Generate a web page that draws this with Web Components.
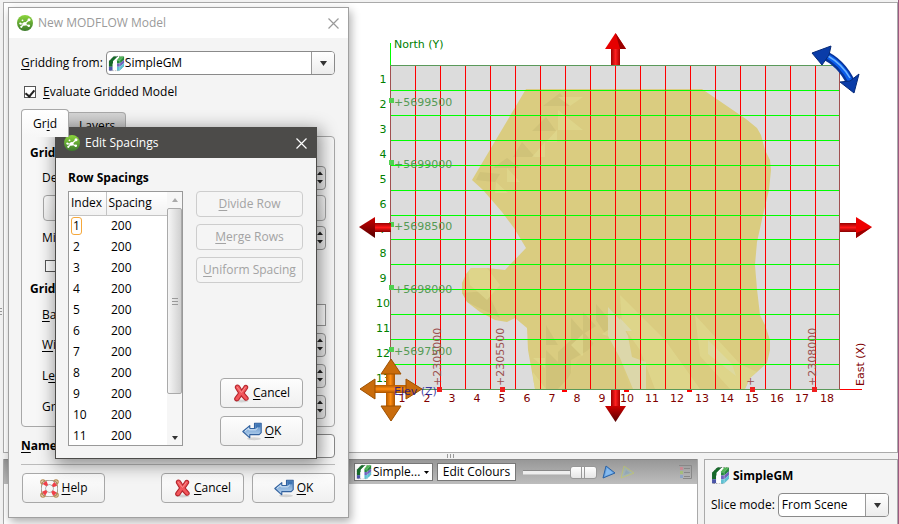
<!DOCTYPE html>
<html lang="en">
<head>
<meta charset="utf-8">
<title>New MODFLOW Model</title>
<style>
html,body{margin:0;height:100%;overflow:hidden}
body{font:12px/16px "Open Sans","Noto Sans",sans-serif;color:#000;background:#f2f2f2}
</style>
</head>
<body>
<app-shell></app-shell>
<script>
const ICONS = {
  frog: `<svg width="16" height="16" viewBox="0 0 16 16"><defs><linearGradient id="fg" x2="0" y2="1"><stop stop-color="#8cd63c"/><stop offset="1" stop-color="#3c7a2c"/></linearGradient></defs><circle cx="8" cy="8" r="8" fill="url(#fg)"/><g fill="none" stroke="#fff" stroke-width="1.200" stroke-linecap="round"><path d="M3.500 8.800l4 .2 4.500-4M7.500 9L4.500 11.500M7.500 9l4 1.800"/></g><g fill="#fff"><circle cx="12" cy="4.800" r="1.500"/><circle cx="7.700" cy="8.800" r="1.900"/><circle cx="3.300" cy="8.500" r="1.100"/><circle cx="4.300" cy="11.800" r="1.100"/><circle cx="11.800" cy="10.800" r="1.300"/><circle cx="5.500" cy="5.300" r=".9"/></g></svg>`,
  model: `<svg width="18" height="18" viewBox="0 0 18 18"><path d="M1.500 16.500V6L6 1.500h10.500V12L12 16.500z" fill="#fff" stroke="#777" stroke-width=".8" stroke-dasharray="1.500 1"/><path d="M1 6.500L6 1.500h4.500L5.500 6.500V9H4.800v3.500H1z" fill="#176a2b"/><path d="M1 12.500h3.800v3.800H1z" fill="#4b55a8"/><path d="M9 5.500L12.500 1.500H17L12.500 6H9z" fill="#52b457"/><path d="M9.500 6h3L17 1.500V5l-4.500 4h-3z" fill="#238a3b"/><path d="M9.500 9h3L17 5v3.500l-4.500 4h-3z" fill="#6f62bd"/><path d="M9.500 12.500h3l4.500-4V12l-4.500 4.500h-3z" fill="#5fc0d2"/><path d="M12.500 6v10.500" stroke="#fff" stroke-opacity=".5" stroke-width=".6"/><path d="M5.300 6.500L9.800 2h2L8.800 6v10.500H5.300z" fill="#fff"/></svg>`,
  cancel: `<svg width="17" height="19" viewBox="0 0 17 19"><ellipse cx="8.500" cy="17" rx="7" ry="1.500" fill="#000" opacity=".13"/><path d="M3.500 1.200Q5.500.3 6.700 2.600L8.700 6 11.300 2Q13 .5 14.300 2.200q1 1.300-.3 2.800L11.200 9l3.600 4.300q1 1.700-.4 2.600-1.700 1-3-.6L8.300 12l-2.800 4.200q-1.500 1.300-3.200.1-1.300-1.300 0-3L5.500 9 2.600 4.300Q1.700 2.200 3.500 1.200z" fill="#f2565b" stroke="#b4242b" stroke-width="1.100"/><path d="M4 3l4.500 5.500 4-5.300" fill="none" stroke="#fb8f8e" stroke-width="1"/></svg>`,
  ok: `<svg width="20" height="19" viewBox="0 0 20 19"><defs><linearGradient id="ob" x2="0" y2="1"><stop stop-color="#5689c5"/><stop offset="1" stop-color="#c2dcf3"/></linearGradient></defs><ellipse cx="12" cy="16.800" rx="7" ry="1.500" fill="#000" opacity=".13"/><path d="M.8 9.500L7.800 3.600v3h4.700V1.300h6.700v9.300l-2 2H7.800v3.200z" fill="url(#ob)" stroke="#33629f" stroke-width="1.100" stroke-linejoin="round"/><path d="M13.500 2.300v4.800l1.800-1.800h3V2.300z" fill="#3f75b4"/><path d="M2.800 9.300l4-3.300v1.800h6.900l2-1.800" fill="none" stroke="#dcecfa"/></svg>`,
  help: `<svg width="19" height="19" viewBox="0 0 19 19"><g fill="none" stroke="#b58b50" stroke-width="1.200"><circle cx="3" cy="3" r="2.200"/><circle cx="16" cy="3" r="2.200"/><circle cx="3" cy="16" r="2.200"/><circle cx="16" cy="16" r="2.200"/><rect x="2" y="2" width="15" height="15" rx="3"/></g><circle cx="9.500" cy="9.500" r="6" fill="none" stroke="#777" stroke-width="5"/><circle cx="9.500" cy="9.500" r="6" fill="none" stroke="#f8f8f8" stroke-width="4"/><circle cx="9.500" cy="9.500" r="6" fill="none" stroke="#f04048" stroke-width="4.200" stroke-dasharray="3.400 6.025" stroke-dashoffset="-3"/></svg>`,
  close: `<svg width="11" height="11" viewBox="0 0 11 11"><path d="M.5.5l10 10M10.500.5l-10 10" stroke="currentColor" stroke-width="1.200"/></svg>`
};
const BASE = `*,:host{box-sizing:border-box}button,input,select{font:inherit;color:inherit;margin:0}svg{display:block;flex:none}u{text-underline-offset:2px}`;

function define(name, html, setup) {
  customElements.define(name, class extends HTMLElement {
    constructor() {
      super();
      const t = document.createElement('template');
      t.innerHTML = html;
      this.attachShadow({mode: 'open'}).append(t.content.cloneNode(true));
    }
    connectedCallback() {
      if (this.ready) return;
      this.ready = true;
      if (setup) setup.call(this, this.shadowRoot);
    }
  });
}

define('ui-icon', `<style>:host{display:inline-block;flex:none}svg{display:block}</style>`, function (r) {
  r.innerHTML += ICONS[this.getAttribute('name')];
  const size = this.getAttribute('size');
  if (size) { const s = r.querySelector('svg'); s.setAttribute('width', size); s.setAttribute('height', size); }
});

define('push-button', `<style>${BASE}
:host{display:block}
button{width:100%;height:var(--button-height,30px);display:flex;align-items:center;justify-content:center;gap:3px;padding:0;border:1px solid #a8a8a8;border-radius:4px;background:linear-gradient(#fdfdfd,#f0f0f0)}
button:disabled{color:#a3a3a3;border-color:#cdcdcd;background:#f5f5f5}
</style><button type="button"><slot name="icon"></slot><span><slot></slot></span></button>`, function (r) {
  r.querySelector('button').disabled = this.hasAttribute('disabled');
});

define('combo-box', `<style>${BASE}
:host{display:grid;grid-template-columns:1fr 23px;height:24px;border:1px solid #8a8a8a;border-radius:4px;background:#fff;overflow:hidden}
select{grid-area:1/1/2/3;appearance:none;border:0;background:none;padding:0 0 0 var(--inset,3px);width:100%;outline:0;z-index:1}
.arrow{grid-area:1/2;border-left:1px solid #999;background:linear-gradient(#fff,#ececec);display:grid;place-items:center;pointer-events:none}
.icon{grid-area:1/1;display:flex;align-items:center;padding-left:1px;pointer-events:none}
</style><span class="icon"><slot name="icon"></slot></span><span class="arrow"><svg width="7" height="5"><path d="M0 0h7L3.500 5z" fill="#333"/></svg></span><select><option></option></select>`, function (r) {
  const s = r.querySelector('select');
  s.options[0].textContent = this.getAttribute('value');
  s.setAttribute('aria-label', this.getAttribute('label'));
});

define('app-window', `<style>${BASE}
:host{display:flex;flex-direction:column;border:1px solid #a0a0a0;background:#f4f4f4;box-shadow:2px 4px 9px rgba(0,0,0,.32)}
header{display:flex;align-items:center;gap:5px;height:30px;padding:0 9px 0 8px;background:#fff;color:#9a9a9a}
h1{flex:1;margin:0;font:inherit}
header button{border:0;background:none;padding:0;width:11px;height:11px}
:host([active]){border-color:#4c4b49;box-shadow:2px 4px 16px 2px rgba(0,0,0,.42)}
:host([active]) header{background:#4c4b49;color:#fff}
</style><header><ui-icon name="frog"></ui-icon><h1></h1><button type="button" aria-label="Close">${ICONS.close}</button></header><slot></slot>`, function (r) {
  r.querySelector('h1').textContent = this.getAttribute('heading');
});

const spin = (id, label) => `<div class="row"><label for="${id}">${label}</label><span class="spin"><input id="${id}" type="text"><svg width="10" height="22"><path d="M2 8h6L5 4.500zM2 13h6l-3 3.500z" fill="#222"/></svg></span></div>`;

define('model-form', `<style>${BASE}
:host{display:flex;flex-direction:column;gap:9px;padding:13px 13px 14px 12px}
.line{display:flex;align-items:center;gap:7px}
.source{gap:3px}
.line combo-box{flex:1}
.check{height:16px;padding-left:3px}
input[type=checkbox]{appearance:none;width:12px;height:12px;border:1px solid #555;background:#fff;display:grid;place-items:center}
input[type=checkbox]:checked::before{content:"";width:4px;height:7px;border:solid #222;border-width:0 2px 2px 0;transform:rotate(40deg)}
.tabs{display:flex;align-items:flex-end;height:27px}
.tabs button{height:24px;padding:3px 10px 0;border:1px solid #a8a8a8;border-left:0;border-radius:0 4px 0 0;background:linear-gradient(#d4d4d4,#bcbcbc)}
.tabs .on{height:28px;margin-bottom:-1px;padding:1px 11px 0;border:1px solid #a8a8a8;border-bottom:0;border-radius:4px 4px 0 0;background:linear-gradient(#fff,#f7f7f7);z-index:1}
.pane{border:1px solid #a8a8a8;border-radius:0 4px 4px 4px;background:#f7f7f7;display:grid;gap:5px;padding:8px 8px 7px;margin-top:-9px}
section{display:grid;gap:5px}
section+section{gap:7px}
h2{margin:0;font:bold 12px/16px "Open Sans","Noto Sans",sans-serif}
.row{display:grid;grid-template-columns:140px 1fr;align-items:center;padding-left:12px}
.plain{border:1px solid #999;background:#fff;height:22px;width:100%}
.spin{display:flex;height:24px;border:1px solid #999;border-radius:4px;background:#eee;overflow:hidden}
.spin input{flex:1;min-width:0;border:0;border-right:1px solid #999;background:#fff}
.pane push-button{--button-height:26px;margin-left:13px}
.pane .check{height:21px;padding-left:15px}
.name{margin-top:-2px;font-weight:bold}
.name input{flex:1;min-width:0;height:24px;border:1px solid #888;border-radius:4px;background:#fff}
footer{display:flex;gap:8px;border-top:1px solid #bbb;padding:8px 0 0 1px;margin-top:-3px}
footer push-button{width:83px}
.push{margin-right:auto}
</style>
<div class="line source"><label><u>G</u>ridding from:</label><combo-box value="SimpleGM" label="Gridding from" style="--inset:18px"><ui-icon slot="icon" name="model" size="17"></ui-icon></combo-box></div>
<div class="line check"><input type="checkbox" id="ev" checked><label for="ev"><u>E</u>valuate Gridded Model</label></div>
<div class="tabs" role="tablist"><button class="on" role="tab" type="button">Gr<u>i</u>d</button><button role="tab" type="button">Layers</button></div>
<div class="pane">
<section><h2>Grid</h2>${spin('de', 'De')}<push-button></push-button>${spin('mi', 'Mi')}<div class="line check"><input type="checkbox" aria-label="Option"></div></section>
<section><h2>Grid</h2><div class="row"><label for="ba"><u>B</u>a</label><input class="plain" id="ba"></div>${spin('wi', '<u>W</u>i')}${spin('le', 'L<u>e</u>')}${spin('gr', 'Gr')}</section>
</div>
<div class="line name"><label for="nm"><u>N</u>ame:</label><input id="nm"></div>
<footer><push-button class="push"><ui-icon slot="icon" name="help"></ui-icon><u>H</u>elp</push-button><push-button><ui-icon slot="icon" name="cancel"></ui-icon><u>C</u>ancel</push-button><push-button><ui-icon slot="icon" name="ok"></ui-icon><u>O</u>K</push-button></footer>`);

define('spacing-table', `<style>${BASE}
:host{display:grid;grid-template-columns:1fr 15px;border:1px solid #999;background:#fff;overflow:hidden;height:255px;align-items:start}
table{border-collapse:collapse;width:100%;table-layout:fixed}
th{height:23px;padding:0 0 0 2px;font-weight:normal;text-align:left;background:linear-gradient(#fff,#f2f2f2);border-bottom:1px solid #c4c4c4}
th+th{border-left:1px solid #c4c4c4}
th:first-child{width:37px}
td{height:21px;padding:0 0 0 2px}
td+td{padding-left:5px}
td span{display:inline-block;padding:0 1px;border:1px solid transparent;border-radius:3px}
tr.sel td:first-child span{border-color:#f5a83c}
.bar{display:flex;flex-direction:column;align-self:stretch;background:#f6f6f6}
.bar button{border:0;padding:0;background:none;height:16px;display:grid;place-items:center}
.thumb{height:186px;border:1px solid #aaa;border-radius:2px;background:linear-gradient(90deg,#f6f6f6,#d0d0d0);display:grid;place-items:center}
.bar button:last-child{margin-top:auto}
</style><table><thead><tr><th>Index</th><th>Spacing</th></tr></thead><tbody></tbody></table>
<div class="bar"><button type="button" aria-label="Scroll up"><svg width="6" height="4"><path d="M0 4h6L3 0z" fill="#aaa"/></svg></button><div class="thumb"><svg width="6" height="7"><path d="M0 .5h6M0 3.500h6M0 6.500h6" stroke="#999"/></svg></div><button type="button" aria-label="Scroll down"><svg width="6" height="4"><path d="M0 0h6L3 4z" fill="#333"/></svg></button></div>`, function (r) {
  const body = r.querySelector('tbody');
  for (let i = 1; i <= 11; i++)
    body.insertAdjacentHTML('beforeend', `<tr${i === 1 ? ' class="sel"' : ''}><td><span>${i}</span></td><td>200</td></tr>`);
});

define('spacing-form', `<style>${BASE}
:host{display:grid;grid-template-columns:115px 107px;gap:5px 13px;padding:12px 13px 12px 12px}
h2{margin:0;grid-column:1/3;font:bold 12px/16px "Open Sans","Noto Sans",sans-serif}
.side{display:flex;flex-direction:column;gap:7px;--button-height:26px}
.bottom{margin-top:auto;padding-left:24px;display:grid;gap:8px;--button-height:30px}
</style><h2>Row Spacings</h2><spacing-table></spacing-table>
<div class="side"><push-button disabled><u>D</u>ivide Row</push-button><push-button disabled><u>M</u>erge Rows</push-button><push-button disabled><u>U</u>niform Spacing</push-button>
<div class="bottom"><push-button><ui-icon slot="icon" name="cancel"></ui-icon><u>C</u>ancel</push-button><push-button><ui-icon slot="icon" name="ok"></ui-icon><u>O</u>K</push-button></div></div>`);

define('scene-view', `<style>
:host{display:block;border:1px solid #aaa;background:#fff;overflow:hidden;min-height:0}
svg{display:block;width:100%;height:100%}
text{font:11px "DejaVu Sans",sans-serif}
.n{fill:#008000}.e{fill:#800000}.ns{fill:#559a55}.es{fill:#9c5050}.m{text-anchor:middle}
</style><svg><defs>
<linearGradient id="rv"><stop stop-color="#900"/><stop offset=".5" stop-color="#ff2020"/><stop offset="1" stop-color="#a00"/></linearGradient>
<linearGradient id="rh" x2="0" y2="1"><stop stop-color="#900"/><stop offset=".5" stop-color="#ff1818"/><stop offset="1" stop-color="#800"/></linearGradient>
<linearGradient id="ov"><stop stop-color="#b35a00"/><stop offset=".5" stop-color="#ff8c10"/><stop offset="1" stop-color="#a85200"/></linearGradient>
<linearGradient id="oh" x2="0" y2="1"><stop stop-color="#b35a00"/><stop offset=".5" stop-color="#ff8c10"/><stop offset="1" stop-color="#a85200"/></linearGradient>
<linearGradient id="dk" x2="0" y2="1"><stop stop-color="#c00"/><stop offset="1" stop-color="#500"/></linearGradient>
<clipPath id="body"><path d="M526 89H702L746 119 757 128 761 135 765 150 770 160 771 170 769 190 763 215 757 242 755 265 757 289 760 315 765 325 770 340 770 350 767 363 757 372 750 378 745 389H535L528 350 527 328 515 318 507 322 495 320 480 312 467 302 462 293 462 283 466 274 471 268 487 268 505 270 526 248 514 228 502 212 483 190 472 180z"/></clipPath></defs>
<g transform="translate(-4 -3)">
<rect x="390" y="65" width="450" height="325" fill="#dcdcdc"/>
<g clip-path="url(#body)"><path fill="#dacc80" d="M455 85H775V390H455z"/>
<path fill="#c9bc74" opacity=".6" d="M543 106L560 93 570 106zM532 131L546 117 556 131zM513 157L522 142 535 157zM493 168L507 158 520 168zM476 180L480 172 500 174 495 182zM546 345V325L558 345zM558 389V352L571 340 571 375zM571 360V318L596 346zM583 334L583 312 596 326zM596 320V304L608 318 608 338zM546 389V350L558 362V389zM462 293L487 291 500 318 467 302z"/>
<path fill="#e0d98e" opacity=".7" d="M558 97H583L570 106zM558 110L583 130H558zM546 142L557 130V142zM532 157L545 142V157zM507 182V168L520 182zM495 193L496 182 508 193zM533 372L546 389H533zM533 358L545 368V358zM571 345L583 334V357zM596 338L608 352V330zM468 268L487 268 500 285 487 300 470 285zM620 295L665 340 700 389H655L640 350 622 325zM695 315L740 364 757 372 745 389H730L700 356z"/>
<path fill="#d8ca80" d="M562 389L578 360 592 346 598 333 608 336 620 358 630 389z"/>
<path fill="#dcd8b2" opacity=".85" d="M608 307L620 320 628 336 632 357 646 362V389H633L620 358 608 336zM620 318L632 331H620z"/>
<path fill="#dcd9a6" opacity=".75" d="M708 340L732 364 736 376 708 354z"/>
</g>
<g id="lines" shape-rendering="crispEdges"></g><g id="labels"></g>
<text class="n" x="394" y="48">North (Y)</text><text class="e" transform="translate(864 386) rotate(-90)">East (X)</text>
<g>
<path fill="url(#rv)" d="M611 48h9v17h-9z"/><path fill="#e60000" d="M605 49h21L615.500 33z"/><path fill="#9a0000" d="M620 49h6L615.500 33z"/>
<path fill="url(#rv)" d="M611 390h9v17h-9z"/><path fill="url(#dk)" d="M605 406h21L615.500 422z"/>
<path fill="url(#rh)" d="M840 223h17v9h-17zM374 223h17v9h-17z"/><path fill="#ee0000" d="M856 217v21l16-11z"/><path fill="#990000" d="M856 238v-5l16-6z"/><path fill="url(#dk)" d="M375 217v21l-16-11z"/>
<path fill="url(#ov)" d="M386 374h9v32h-9z"/><path fill="url(#oh)" d="M375 385h32v8h-32z"/>
<g fill="#c96c0c" stroke="#9c5000" stroke-width="1"><path d="M381 374h20L391 359zM381 406h20L391 421zM375 379v20L360 389zM406 379v20L422 389z"/></g>
<path d="M822 54Q841 62 851 83" fill="none" stroke="#07349a" stroke-width="9"/><path d="M824 54Q842 63 851 82" fill="none" stroke="#0a5bea" stroke-width="5"/><path d="M828 56Q842 64 850 78" fill="none" stroke="#6eb4ff" stroke-width="1.500"/>
<path fill="#0a3ca8" stroke="#062a78" d="M812 53l19-7-2 9-7 10z"/><path fill="#0a3ca8" stroke="#062a78" d="M840 82l10-1 9-7-5 19z"/>
</g>
<text x="394" y="395" fill="#101090" opacity=".8">Elev (Z)</text>
</g></svg>`, function (r) {
  const xs = Array.from({length: 18}, (_, i) => 390 + 25 * i), ys = [65, 90, 115, 140, 165, 190, 215, 239, 264, 289, 314, 339, 364];
  let l = '', t = '';
  for (const x of xs.slice(1)) l += `<path fill="#f00" d="M${x} 66h1v323h-1z"/>`;
  for (const y of ys.slice(1)) l += `<path fill="#0f0" d="M391 ${y}h448v1h-448z"/>`;
  l += '<path fill="#5a9a5a" d="M390 65h450v1H390zM390 389h450v1H390z"/><path fill="#a05050" d="M390 66h1v323h-1zM839 66h1v323h-1z"/><path fill="#0f0" d="M390 43h1v22h-1z"/><path fill="#f00" d="M840 389h22v1h-22z"/>';
  ys.forEach((y, i) => t += `<text class="n m" x="383" y="${y + 18}">${i + 1}</text>`);
  xs.forEach((x, i) => t += `<text class="e m" x="${x + 12}" y="402">${i + 1}</text>`);
  [[5699500, 106], [5699000, 168], [5698500, 230], [5698000, 293], [5697500, 355]].forEach(([n, y]) => {
    t += `<text class="ns" x="394" y="${y}">+${n}</text>`;
    l += `<path fill="#50d050" d="M389 ${y - 8}h5v5h-5z"/>`;
  });
  [['+2305000', 441], ['+2305500', 504], ['+', 754], ['+2308000', 816]].forEach(([n, x]) => {
    t += `<text class="es" transform="translate(${x} 386) rotate(-90)">${n}</text>`;
    l += `<path fill="#ee2020" d="M${x - 4} 387h5v5h-5z"/>`;
  });
  [562, 624, 687].forEach(x => l += `<path fill="#f00" d="M${x} 390h5v2h-5z"/>`);
  r.getElementById('lines').innerHTML = l;
  r.getElementById('labels').innerHTML = t;
});

define('shape-toolbar', `<style>${BASE}
:host{display:flex;align-items:center;justify-content:flex-end;gap:4px;height:25px;padding:0 3px 0 350px;background:linear-gradient(#989898,#bdbdbd);border-top:1px solid #888}
button{display:flex;align-items:center;gap:1px;height:18px;padding:0 5px;border:1px solid #777;background:#fff;white-space:nowrap}
.pick{padding:0 3px 0 1px;width:79px}
.edit{width:79px;justify-content:center;padding:0}
.arrow{margin-left:auto}
input{appearance:none;width:74px;height:14px;margin:0 3px 0 3px;background:linear-gradient(#888,#888) 0 5px/100% 1px no-repeat,linear-gradient(#eee,#eee) 0 6px/100% 3px no-repeat,linear-gradient(#ccc,#ccc) 0 9px/100% 1px no-repeat}
input::-webkit-slider-thumb{appearance:none;width:27px;height:13px;border:1px solid #999;border-radius:3px;background:linear-gradient(90deg,transparent 10px,#999 10px,#999 11px,transparent 11px,transparent 13px,#999 13px,#999 14px,transparent 14px),linear-gradient(#fff,#e6e6e6)}
.play{margin-left:-2px}
.faint{opacity:.45}
.list{margin-left:auto}
</style><button class="pick" type="button"><ui-icon name="model" size="16"></ui-icon>Simple...<svg class="arrow" width="5" height="3"><path d="M0 0h5L2.500 3z"/></svg></button><button class="edit" type="button">Edit Colours</button><input type="range" aria-label="Opacity" value="100">
<svg class="play" width="14" height="14"><path d="M4 1l9 7-12 5z" fill="#65a3e2" stroke="#2b62a5"/><path d="M5 3l6 5-8 3z" fill="#9cc9f5" opacity=".6"/></svg>
<svg class="faint" width="15" height="14"><path d="M4 1l10 7L1 13z" fill="#9bb" stroke="#cdd840"/><path d="M6 5l4 3-6 2z" fill="#77a4c4"/></svg>
<svg class="list" width="15" height="16"><path d="M0 1.500h12.500v13H4" fill="none" stroke="#888"/><path d="M5 4.500h6M5 8.500h6M5 12.500h6" stroke="#888"/><path fill="#c98a94" d="M1 3h3v3H1z"/><path fill="#a5bd7c" d="M1 7h3v3H1z"/><path fill="#90a5c4" d="M1 11h3v3H1z"/></svg>`);

define('shape-properties', `<style>${BASE}
:host{display:grid;align-content:start;gap:8px;padding:6px 8px 0 6px;border:solid #aaa;border-width:1px 1px 0;background:#f4f4f4}
div{display:flex;align-items:center;gap:3px}
combo-box{flex:1}
</style><div><ui-icon name="model" size="19"></ui-icon><b>SimpleGM</b></div><div><label>Slice mode:</label><combo-box value="From Scene" label="Slice mode"></combo-box></div>`);

define('app-shell', `<style>${BASE}
:host{display:grid;grid-template:1fr 65px/1fr;row-gap:6px;height:100vh;padding:2px 0 0 3px;border-right:1px solid #9a5a80;background:#f2f2f2}
.lower{display:grid;grid-template-columns:1fr 194px;gap:6px}
.shapes{border:solid #aaa;border-width:0 1px;background:#fff}
.grip{position:absolute;left:447px;top:454px}
.side-grip{position:absolute;left:0;top:308px}
.model{position:absolute;left:8px;top:7px;width:341px}
.spacing{position:absolute;left:55px;top:127px}
</style><scene-view></scene-view>
<div class="lower"><div class="shapes"><shape-toolbar></shape-toolbar></div><shape-properties></shape-properties></div>
<svg class="grip" width="8" height="4"><path d="M.5 0v4M3.500 0v4M6.500 0v4" stroke="#999"/></svg>
<svg class="side-grip" width="2" height="8"><path d="M0 .5h2M0 3.500h2M0 6.500h2" stroke="#999"/></svg>
<app-window class="model" heading="New MODFLOW Model"><model-form></model-form></app-window>
<app-window class="spacing" heading="Edit Spacings" active><spacing-form></spacing-form></app-window>`);
</script>
</body>
</html>
